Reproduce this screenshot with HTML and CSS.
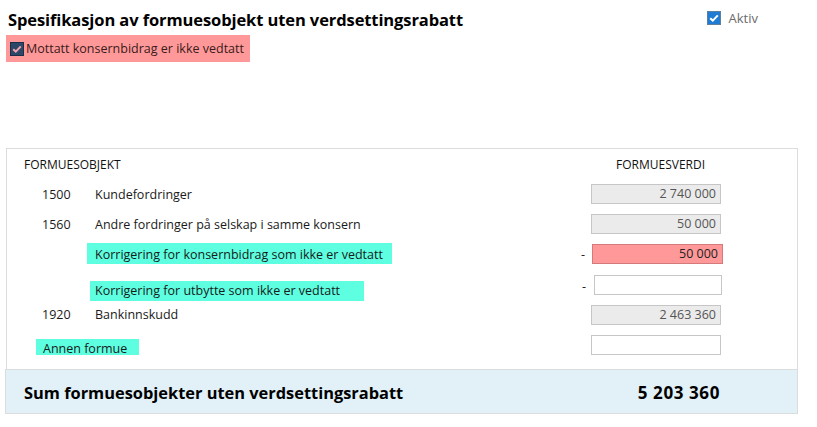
FILE: index.html
```html
<!DOCTYPE html>
<html>
<head>
<meta charset="utf-8">
<link rel="stylesheet" href="styles.css">
</head>
<body>
<div class="page">
  <div class="top">
    <div class="top-left">
      <h1 class="title">Spesifikasjon av formuesobjekt uten verdsettingsrabatt</h1>
      <label class="flag">
        <svg class="cb" width="14" height="14" viewBox="0 0 14 14"><rect x="0.5" y="0.5" width="13" height="13" fill="#2c4767" stroke="#1c2f47"/><path d="M3.2 7.2 L5.8 9.6 L10.8 4.4" fill="none" stroke="#f3a3ab" stroke-width="2"/></svg>
        <span>Mottatt konsernbidrag er ikke vedtatt</span>
      </label>
    </div>
    <label class="aktiv">
      <svg class="cb" width="14" height="14" viewBox="0 0 14 14"><rect x="0.5" y="0.5" width="13" height="13" fill="#1f7bd3" stroke="#5f7f9f"/><path d="M3.2 7.2 L5.8 9.6 L10.8 4.4" fill="none" stroke="#fff" stroke-width="2"/></svg>
      <span>Aktiv</span>
    </label>
  </div>

  <div class="panel">
    <div class="panel-body">
      <div class="head">
        <span class="h-obj">FORMUESOBJEKT</span>
        <span class="h-val">FORMUESVERDI</span>
      </div>
      <div class="row">
        <span class="code">1500</span>
        <span class="name">Kundefordringer</span>
        <span class="minus"></span>
        <span class="inp ro">2 740 000</span>
      </div>
      <div class="row">
        <span class="code">1560</span>
        <span class="name">Andre fordringer på selskap i samme konsern</span>
        <span class="minus"></span>
        <span class="inp ro">50 000</span>
      </div>
      <div class="row">
        <span class="code"></span>
        <span class="name name-hl"><span class="hl hl-a">Korrigering for konsernbidrag som ikke er vedtatt</span></span>
        <span class="minus">-</span>
        <span class="inp err">50 000</span>
      </div>
      <div class="row">
        <span class="code"></span>
        <span class="name name-hl"><span class="hl hl-b">Korrigering for utbytte som ikke er vedtatt</span></span>
        <span class="minus minus-b">-</span>
        <span class="inp edit"></span>
      </div>
      <div class="row">
        <span class="code">1920</span>
        <span class="name">Bankinnskudd</span>
        <span class="minus"></span>
        <span class="inp ro">2 463 360</span>
      </div>
      <div class="row">
        <span class="other"><span class="hl hl-c">Annen formue</span></span>
        <span class="minus"></span>
        <span class="inp edit2"></span>
      </div>
    </div>
    <div class="sum">
      <span class="sum-label">Sum formuesobjekter uten verdsettingsrabatt</span>
      <span class="sum-val">5 203 360</span>
    </div>
  </div>
</div>
</body>
</html>
```

FILE: styles.css
```css
* { box-sizing: border-box; }
html, body { margin: 0; padding: 0; background: #fff; }
body {
  font-family: "Open Sans", "Noto Sans", "Liberation Sans", sans-serif;
  font-size: 12.5px;
  color: #1a1a1a;
  width: 817px;
  height: 427px;
  overflow: hidden;
}
.page { padding: 9px 0 0 6px; }
.top { display: flex; justify-content: space-between; width: 791px; height: 139px; }
.top-left { display: flex; flex-direction: column; align-items: flex-start; }
.title {
  margin: 0 0 0 2px;
  font-size: 16.5px;
  font-weight: 700;
  line-height: 22px;
  color: #000;
  letter-spacing: -0.1px;
}
.flag {
  display: flex;
  align-items: center;
  gap: 2px;
  margin-top: 4px;
  height: 27px;
  padding: 0 6px 0 4px;
  background: #ff9999;
  color: #3a1a1a;
  font-size: 12.5px;
}
.cb { display: block; flex: none; }
.aktiv {
  display: flex;
  align-items: center;
  gap: 8px;
  height: 18px;
  margin-right: 39px;
  color: #6b6b6b;
  font-size: 13px;
}
.panel { width: 792px; }
.panel-body {
  border: 1px solid #dcdcdc;
  border-bottom: none;
  padding: 0 0 9px 0;
}
.head {
  display: flex;
  justify-content: space-between;
  height: 30px;
  align-items: center;
  padding: 0 0 0 17px;
  font-size: 12px;
  color: #111;
}
.h-val { width: 191px; text-align: left; padding-left: 10px; }
.row {
  display: flex;
  align-items: center;
  height: 30.2px;
}
.code { width: 88px; padding-left: 35px; flex: none; }
.name { flex: 1; display: flex; }
.name-hl { align-self: stretch; align-items: flex-start; }
.minus { width: 10px; flex: none; text-align: left; }
.minus-b { padding-top: 3px; }
.inp {
  width: 130px;
  height: 20px;
  flex: none;
  margin-right: 76px;
  border: 1px solid #c6c6c6;
  text-align: right;
  padding: 0 4px;
  line-height: 18px;
  font-size: 12.5px;
}
.ro { background: #ebebeb; color: #555; }
.err { background: #ff9999; border-color: #d57a7a; color: #222; width: 131px; margin-right: 74px; margin-left: 1px; }
.edit { background: #fff; margin-left: 2px; margin-right: 75px; width: 128px; }
.edit2 { background: #fff; }
.hl { background: #5dffe0; display: block; line-height: 17px; }
.hl-a { margin-left: -8px; margin-top: 4px; height: 21px; padding: 3px 9px 0 8px; }
.hl-b { margin-left: -5px; margin-top: 11px; height: 20px; padding: 1px 24px 0 5px; }
.other { flex: 1; display: flex; padding-left: 29px; align-self: stretch; align-items: flex-start; }
.hl-c { margin-top: 9px; height: 16px; line-height: 20px; padding: 0 12px 0 7px; }
.sum {
  display: flex;
  justify-content: space-between;
  align-items: center;
  height: 45px;
  margin-left: -1px;
  width: 793px;
  background: #e2f0f8;
  border: 1px solid #dcdcdc;
  padding: 1px 77px 0 18px;
  font-weight: 700;
  color: #000;
}
.sum-label { font-size: 16.4px; }
.sum-val { font-size: 17px; letter-spacing: 0.6px; }
```
